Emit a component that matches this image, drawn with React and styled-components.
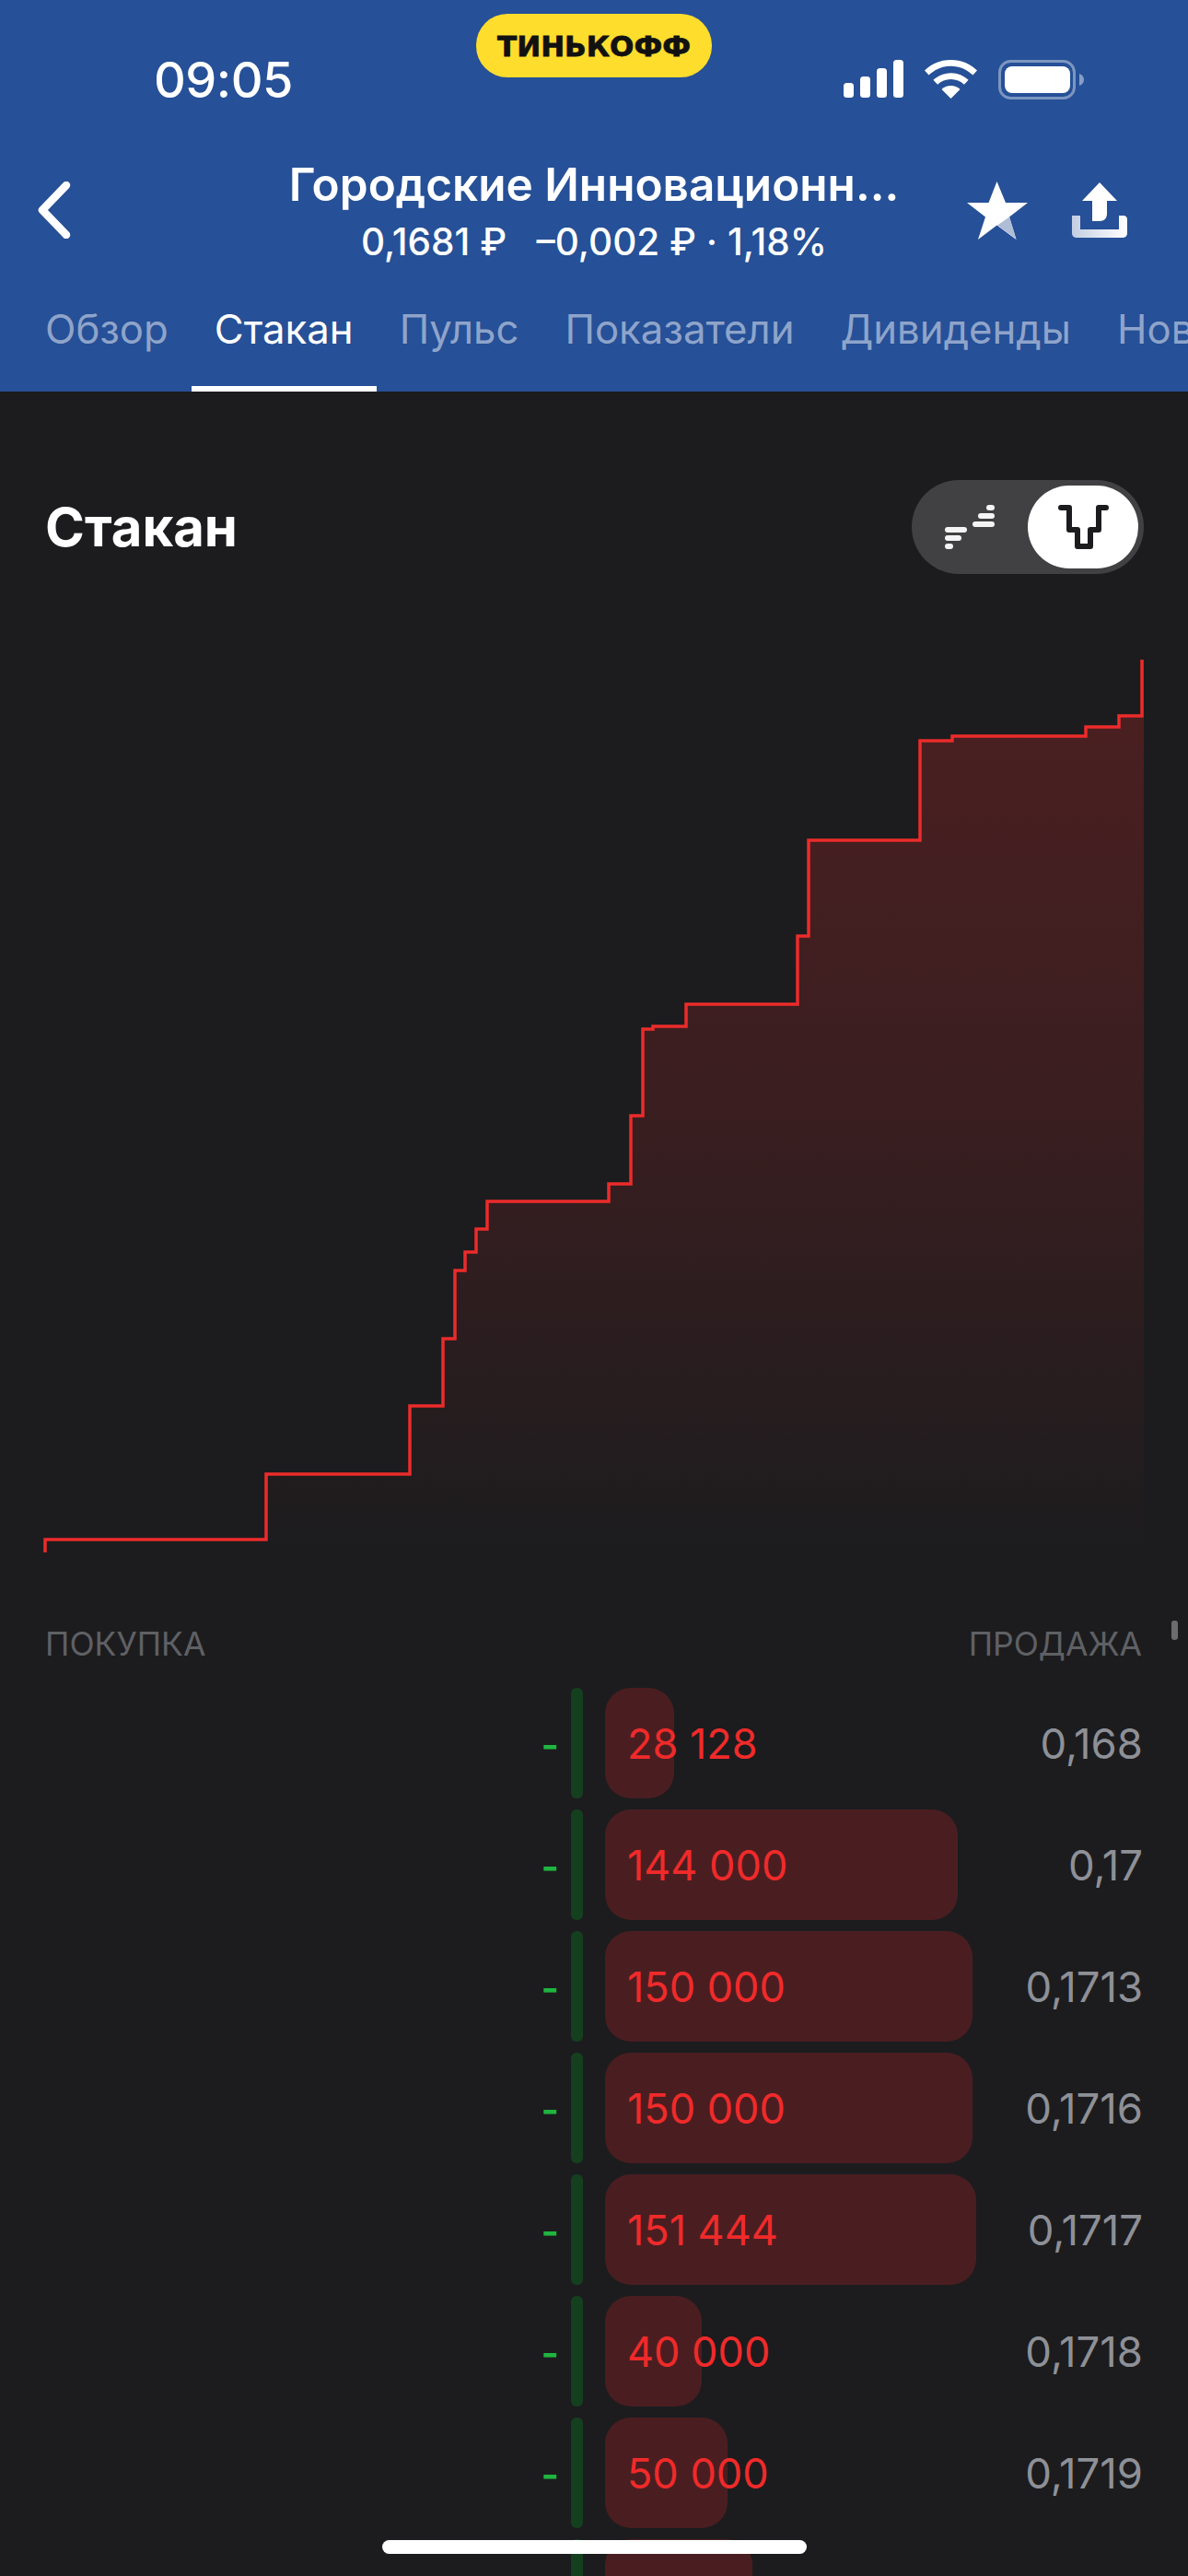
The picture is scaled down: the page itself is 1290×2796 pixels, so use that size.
import React from 'react'
import styled, { createGlobalStyle } from 'styled-components'

const GlobalStyle = createGlobalStyle`
  html, body {
    margin: 0;
    padding: 0;
    background: #1c1c1e;
  }
  * {
    box-sizing: border-box;
  }
`

const TABS = ['Обзор', 'Стакан', 'Пульс', 'Показатели', 'Дивиденды', 'Новости']

const ORDERS = [
  { volume: '28 128', price: '0,168', width: 75 },
  { volume: '144 000', price: '0,17', width: 383 },
  { volume: '150 000', price: '0,1713', width: 399 },
  { volume: '150 000', price: '0,1716', width: 399 },
  { volume: '151 444', price: '0,1717', width: 403 },
  { volume: '40 000', price: '0,1718', width: 105 },
  { volume: '50 000', price: '0,1719', width: 133 },
  { volume: '', price: '', width: 160 },
]

/* Depth line, in page coordinates */
const DEPTH = [
  [49, 1685], [49, 1671], [289, 1671], [289, 1600], [445, 1600], [445, 1526],
  [481, 1526], [481, 1453], [494, 1453], [494, 1379], [505, 1379], [505, 1359],
  [517, 1359], [517, 1334], [529, 1334], [529, 1304], [661, 1304], [661, 1285],
  [685, 1285], [685, 1211], [698, 1211], [698, 1117], [709, 1117], [709, 1114],
  [745, 1114], [745, 1090], [866, 1090], [866, 1016], [878, 1016], [878, 912],
  [999, 912], [999, 804], [1034, 804], [1034, 799], [1179, 799], [1179, 789],
  [1215, 789], [1215, 777], [1240, 777], [1240, 716],
]
const linePoints = DEPTH.map(p => p.join(',')).join(' ')
const areaPoints = `${linePoints} 1242,716 1242,1685 49,1685`

const Signal = () => (
  <svg width="65" height="41" viewBox="0 0 65 41" fill="#fff">
    <rect x="0" y="25" width="11" height="16" rx="3.5" />
    <rect x="18" y="18" width="11" height="23" rx="3.5" />
    <rect x="36" y="9" width="11" height="32" rx="3.5" />
    <rect x="54" y="0" width="11" height="41" rx="3.5" />
  </svg>
)

const Wifi = () => (
  <svg width="57" height="42" viewBox="0 0 57 42" fill="#fff">
    <path d="M28.5 0C40 0 49.8 4.4 57 11.5l-4.6 5C46 10.4 37.8 6.7 28.5 6.7S11 10.4 4.6 16.5L0 11.5C7.2 4.4 17 0 28.5 0z" />
    <path d="M28.5 14.2c7.6 0 14.2 3 19.1 7.6l-4.7 5c-3.8-3.5-8.8-5.7-14.4-5.7s-10.6 2.2-14.4 5.7l-4.7-5c4.9-4.6 11.5-7.6 19.1-7.6z" />
    <path d="M28.5 28c3.9 0 7.4 1.5 10 3.9L28.5 42l-10-10.1c2.6-2.4 6.1-3.9 10-3.9z" />
  </svg>
)

const Battery = () => (
  <svg width="93" height="43" viewBox="0 0 93 43">
    <rect x="1.5" y="1.5" width="81" height="40" rx="12" fill="none" stroke="#fff" strokeOpacity="0.4" strokeWidth="3" />
    <rect x="7" y="7" width="71" height="29" rx="8" fill="#fff" />
    <path d="M88 15c3 1 5 3.5 5 6.5s-2 5.500-5 6.500z" fill="#fff" fillOpacity="0.45" />
  </svg>
)

const BackIcon = () => (
  <svg width="36" height="62" viewBox="0 0 36 62" fill="none">
    <path d="M31 4L5 31l26 27" stroke="#fff" strokeWidth="8.500" strokeLinecap="round" strokeLinejoin="round" />
  </svg>
)

const StarIcon = () => (
  <svg width="66" height="63" viewBox="0 0 66 63">
    <path d="M32.500 0l9.500 23h24L46 38.500 53.500 63 32.500 47.500 12 63l8-24.500L0 23h23.500z" fill="#fff" />
    <path d="M46 38.500L53.500 62.500 33 47.500z" fill="#afbdd6" />
  </svg>
)

const ShareIcon = () => (
  <svg width="60" height="60" viewBox="0 0 60 60">
    <defs>
      <linearGradient id="tray" x1="0" x2="1" y1="0" y2="0">
        <stop offset="0" stopColor="#c3cee2" />
        <stop offset="1" stopColor="#ffffff" />
      </linearGradient>
    </defs>
    <path d="M30 0l19 20H38v14c0 5-3 8-8 8h-8V20H11z" fill="#fff" />
    <path d="M0 36h9v15h42V36h5c2 0 4 1.500 4 4v15c0 3-2 5-5 5H5c-3 0-5-2-5-5z" fill="url(#tray)" />
  </svg>
)

const LevelsIcon = () => (
  <svg width="54" height="48" viewBox="0 0 54 48" fill="#f4f4f4">
    <rect x="30" y="18" width="24" height="6" rx="3" />
    <rect x="36" y="9" width="18" height="6" rx="3" />
    <rect x="45" y="0" width="9" height="6" rx="3" />
    <rect x="0" y="24" width="24" height="6" rx="3" />
    <rect x="0" y="33" width="18" height="6" rx="3" />
    <rect x="0" y="42" width="9" height="6" rx="3" />
  </svg>
)

const DepthIcon = () => (
  <svg width="55" height="48" viewBox="0 0 55 48" fill="none">
    <path
      d="M3 3h9v24h9v18h14V27h9V3h8"
      stroke="#1c1c1e"
      strokeWidth="6"
      strokeLinecap="round"
      strokeLinejoin="round"
    />
  </svg>
)

const DepthChart = () => (
  <ChartSvg viewBox="0 700 1290 1000">
    <defs>
      <linearGradient id="depthFill" gradientUnits="userSpaceOnUse" x1="0" x2="0" y1="716" y2="1685">
        <stop offset="0" stopColor="#e52a2a" stopOpacity="0.24" />
        <stop offset="0.5" stopColor="#e52a2a" stopOpacity="0.15" />
        <stop offset="0.8" stopColor="#e52a2a" stopOpacity="0.06" />
        <stop offset="1" stopColor="#e52a2a" stopOpacity="0" />
      </linearGradient>
    </defs>
    <polygon points={areaPoints} fill="url(#depthFill)" />
    <polyline points={linePoints} fill="none" stroke="#ec2b2b" strokeWidth="3.5" />
  </ChartSvg>
)

const App = () => {
  return (
    <Page>
      <GlobalStyle />
      <Header>
        <StatusBar>
          <Time>09:05</Time>
          <Brand>ТИНЬКОФФ</Brand>
          <StatusIcons>
            <Signal />
            <Wifi />
            <Battery />
          </StatusIcons>
        </StatusBar>
        <NavRow>
          <BackButton><BackIcon /></BackButton>
          <TitleBlock>
            <Title>Городские Инновационн...</Title>
            <Subtitle>0,1681 ₽&nbsp;&nbsp; –0,002 ₽ · 1,18%</Subtitle>
          </TitleBlock>
          <Actions>
            <StarIcon />
            <ShareIcon />
          </Actions>
        </NavRow>
        <Tabs>
          {TABS.map(tab => (
            <Tab key={tab} $active={tab === 'Стакан'}>{tab}</Tab>
          ))}
        </Tabs>
      </Header>

      <SectionHead>
        <SectionTitle>Стакан</SectionTitle>
        <Toggle>
          <ToggleOption><LevelsIcon /></ToggleOption>
          <ToggleThumb><DepthIcon /></ToggleThumb>
        </Toggle>
      </SectionHead>

      <DepthChart />

      <Labels>
        <span>Покупка</span>
        <span>Продажа</span>
      </Labels>

      <Rows>
        {ORDERS.map((order, i) => (
          <Row key={i}>
            <BuyCell>{order.volume && '-'}</BuyCell>
            <Divider />
            <SellCell>
              <SellBar $width={order.width} />
              <Volume>{order.volume}</Volume>
            </SellCell>
            <Price>{order.price}</Price>
          </Row>
        ))}
      </Rows>

      <ScrollThumb />
      <HomeIndicator />
    </Page>
  )
}

const fontStack = `Inter, "Noto Sans", sans-serif`

const Page = styled.div`
  position: relative;
  width: 1290px;
  height: 2796px;
  overflow: hidden;
  background: #1c1c1e;
  font-family: ${fontStack};
  color: #fff;
`

const Header = styled.header`
  background: #265097;
  height: 425px;
`

const StatusBar = styled.div`
  display: grid;
  grid-template-columns: 1fr 256px 1fr;
  height: 166px;
`

const Time = styled.div`
  margin: 57px 0 0 167px;
  font-size: 54px;
  line-height: 60px;
  font-weight: 500;
  letter-spacing: -0.5px;
`

const Brand = styled.div`
  margin-top: 15px;
  height: 69px;
  border-radius: 34px;
  background: #ffdd2d;
  display: flex;
  align-items: center;
  justify-content: center;
  font-family: "DejaVu Sans", sans-serif;
  font-size: 31px;
  font-weight: 700;
  color: #111;
  -webkit-text-stroke: 0.8px #111;
`

const StatusIcons = styled.div`
  margin: 65px 0 0 143px;
  display: flex;
  align-items: flex-start;
  gap: 23px;
`

const NavRow = styled.div`
  display: grid;
  grid-template-columns: 246px 1fr 246px;
  align-items: center;
  height: 124px;
`

const BackButton = styled.div`
  display: flex;
  padding-left: 41px;
`

const TitleBlock = styled.div`
  display: flex;
  flex-direction: column;
  align-items: center;
  gap: 11px;
  white-space: nowrap;
`

const Title = styled.div`
  font-size: 49.5px;
  line-height: 58px;
  font-weight: 600;
`

const Subtitle = styled.div`
  font-size: 40.5px;
  line-height: 46px;
  font-weight: 500;
`

const Actions = styled.div`
  display: flex;
  align-items: center;
  gap: 48px;
  padding-left: 6px;
`

const Tabs = styled.nav`
  display: flex;
  height: 135px;
  padding-left: 24px;
  overflow: hidden;
`

const Tab = styled.div`
  display: flex;
  align-items: center;
  flex: none;
  padding: 6px 25px 0;
  font-size: 43.7px;
  color: ${props => props.$active ? '#fff' : '#8fa4ca'};
  border-bottom: 6px solid ${props => props.$active ? '#fff' : 'transparent'};
`

const SectionHead = styled.div`
  display: flex;
  align-items: center;
  justify-content: space-between;
  padding: 96px 48px 0 49px;
`

const SectionTitle = styled.h2`
  margin: 0;
  font-size: 58px;
  font-weight: 700;
`

const Toggle = styled.div`
  display: flex;
  align-items: center;
  justify-content: space-between;
  width: 252px;
  height: 102px;
  padding: 0 6px 0 36px;
  border-radius: 51px;
  background: #414143;
`

const ToggleOption = styled.div`
  display: flex;
`

const ToggleThumb = styled.div`
  display: flex;
  align-items: center;
  justify-content: center;
  width: 120px;
  height: 90px;
  border-radius: 45px;
  background: #fff;
`

const ChartSvg = styled.svg`
  display: block;
  width: 1290px;
  height: 1000px;
  margin-top: 77px;
`

const Labels = styled.div`
  display: flex;
  justify-content: space-between;
  margin-top: 65px;
  padding: 0 50px 0 49px;
  font-size: 35.5px;
  line-height: 40px;
  color: #5f6064;
  text-transform: uppercase;
`

const Rows = styled.div`
  display: flex;
  flex-direction: column;
  gap: 12px;
  margin-top: 27px;
  padding: 0 49px;
`

const Row = styled.div`
  display: grid;
  grid-template-columns: 571px 13px 1fr auto;
  align-items: center;
  height: 120px;
`

const BuyCell = styled.div`
  padding: 2px 13px 0 0;
  text-align: right;
  font-size: 42px;
  font-weight: 600;
  color: #1fb53f;
`

const Divider = styled.div`
  height: 120px;
  border-radius: 6px;
  background: #15401f;
`

const SellCell = styled.div`
  position: relative;
  display: flex;
  align-items: center;
  height: 120px;
  margin-left: 24px;
  padding-left: 24px;
`

const SellBar = styled.div`
  position: absolute;
  top: 0;
  left: 0;
  height: 120px;
  width: ${props => props.$width}px;
  border-radius: 28px;
  background: #4a1e21;
`

const Volume = styled.div`
  position: relative;
  font-size: 45px;
  color: #f02a2a;
`

const Price = styled.div`
  font-size: 45.5px;
  color: #8e9097;
`

const ScrollThumb = styled.div`
  position: absolute;
  top: 1759px;
  left: 1272px;
  width: 7px;
  height: 21px;
  border-radius: 3px;
  background: #6c6c6f;
`

const HomeIndicator = styled.div`
  position: absolute;
  top: 2757px;
  left: 415px;
  width: 461px;
  height: 15px;
  border-radius: 8px;
  background: #fff;
`

export default App
